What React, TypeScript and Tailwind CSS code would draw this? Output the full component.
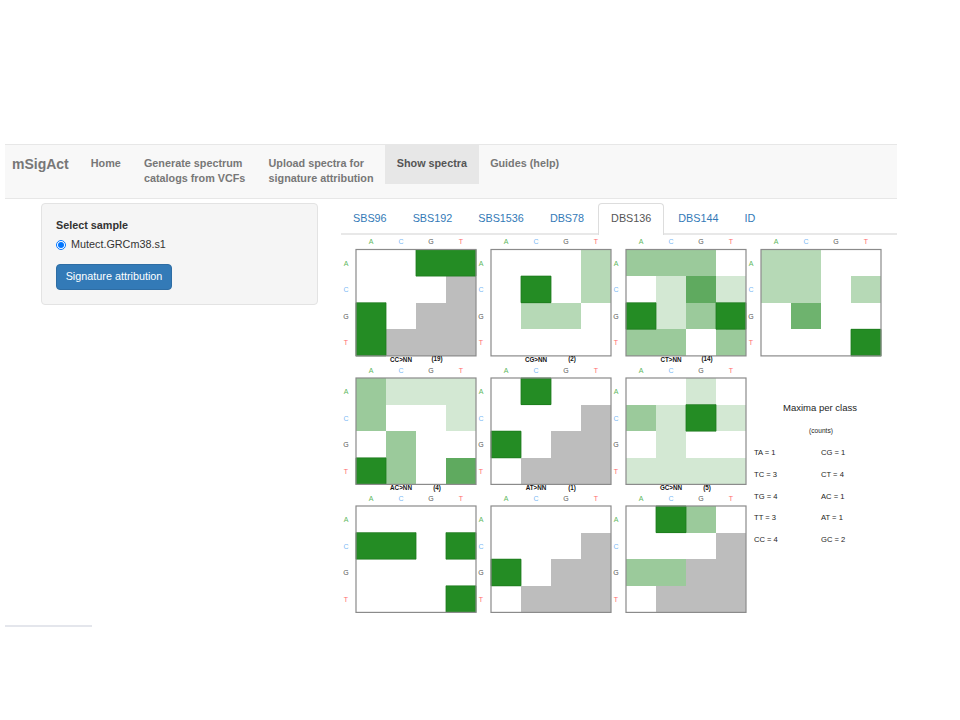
const NAV_ITEMS = [
  { label: ["Home"] },
  { label: ["Generate spectrum", "catalogs from VCFs"] },
  { label: ["Upload spectra for", "signature attribution"] },
  { label: ["Show spectra"], active: true },
  { label: ["Guides (help)"] },
];

const TABS = ["SBS96", "SBS192", "SBS1536", "DBS78", "DBS136", "DBS144", "ID"];

const BASES = ["A", "C", "G", "T"];
const BASE_COLORS = ["#5cb85c", "#7ab8f5", "#555555", "#ff6b6b"];

// cell values are green alpha, -1 is a grey "not possible" cell
const X = -1;
const PLOTS = [
  {
    col: 0,
    row: 0,
    title: "CC>NN",
    count: "(19)",
    cells: [
      [0, 0, 1, 1],
      [0, 0, 0, X],
      [1, 0, X, X],
      [1, X, X, X],
    ],
  },
  {
    col: 1,
    row: 0,
    title: "CG>NN",
    count: "(2)",
    cells: [
      [0, 0, 0, 0.33],
      [0, 1, 0, 0.33],
      [0, 0.33, 0.33, 0],
      [0, 0, 0, 0],
    ],
  },
  {
    col: 2,
    row: 0,
    title: "CT>NN",
    count: "(14)",
    cells: [
      [0.46, 0.46, 0.46, 0],
      [0, 0.2, 0.73, 0.2],
      [1, 0.2, 0.46, 1],
      [0.46, 0.46, 0, 0.46],
    ],
  },
  {
    col: 3,
    row: 0,
    cells: [
      [0.33, 0.33, 0, 0],
      [0.33, 0.33, 0, 0.33],
      [0, 0.66, 0, 0],
      [0, 0, 0, 1],
    ],
  },
  {
    col: 0,
    row: 1,
    title: "AC>NN",
    count: "(4)",
    cells: [
      [0.46, 0.2, 0.2, 0.2],
      [0.46, 0, 0, 0.2],
      [0, 0.46, 0, 0],
      [1, 0.46, 0, 0.73],
    ],
  },
  {
    col: 1,
    row: 1,
    title: "AT>NN",
    count: "(1)",
    cells: [
      [0, 1, 0, 0],
      [0, 0, 0, X],
      [1, 0, X, X],
      [0, X, X, X],
    ],
  },
  {
    col: 2,
    row: 1,
    title: "GC>NN",
    count: "(5)",
    cells: [
      [0, 0, 0.2, 0],
      [0.46, 0.2, 1, 0.2],
      [0, 0.2, 0, 0],
      [0.2, 0.2, 0.2, 0.2],
    ],
  },
  {
    col: 0,
    row: 2,
    cells: [
      [0, 0, 0, 0],
      [1, 1, 0, 1],
      [0, 0, 0, 0],
      [0, 0, 0, 1],
    ],
  },
  {
    col: 1,
    row: 2,
    cells: [
      [0, 0, 0, 0],
      [0, 0, 0, X],
      [1, 0, X, X],
      [0, X, X, X],
    ],
  },
  {
    col: 2,
    row: 2,
    cells: [
      [0, 1, 0.46, 0],
      [0, 0, 0, X],
      [0.46, 0.46, X, X],
      [0, X, X, X],
    ],
  },
];

const MAXIMA = [
  ["TA = 1", "CG = 1"],
  ["TC = 3", "CT = 4"],
  ["TG = 4", "AC = 1"],
  ["TT = 3", "AT = 1"],
  ["CC = 4", "GC = 2"],
];

const COL_X = [356, 491, 626, 761];
const ROW_Y = [249.5, 378, 506];
const CELL_W = 30;
const CELL_H = 26.6;

type PlotProps = {
  col: number;
  row: number;
  title?: string;
  count?: string;
  cells: number[][];
};

const Plot = ({ col, row, title, count, cells }: PlotProps) => {
  const x0 = COL_X[col];
  const y0 = ROW_Y[row];

  // dark outline goes only round a block of full-green cells, not between them
  const isFull = (r: number, c: number) => cells[r]?.[c] === 1;

  return (
    <g>
      {BASES.map((base, i) => (
        <text
          key={"top" + base}
          x={x0 + 15 + i * CELL_W}
          y={y0 - 5.5}
          fontSize="7"
          textAnchor="middle"
          fill={BASE_COLORS[i]}
        >
          {base}
        </text>
      ))}
      {BASES.map((base, i) => (
        <text
          key={"left" + base}
          x={x0 - 10}
          y={y0 + 16 + i * CELL_H}
          fontSize="7"
          textAnchor="middle"
          fill={BASE_COLORS[i]}
        >
          {base}
        </text>
      ))}
      {cells.map((cols, r) =>
        cols.map((v, c) =>
          v === 0 ? null : (
            <rect
              key={r + "-" + c}
              x={x0 + c * CELL_W}
              y={y0 + r * CELL_H}
              width={CELL_W}
              height={CELL_H}
              fill={v === X ? "#bdbdbd" : "#228b22"}
              fillOpacity={v === X ? 1 : v}
              shapeRendering="crispEdges"
            />
          ),
        ),
      )}
      {cells.map((cols, r) =>
        cols.map((v, c) => {
          if (v !== 1) return null;
          const x = x0 + c * CELL_W;
          const y = y0 + r * CELL_H;
          return (
            <g key={"edge" + r + "-" + c} stroke="#1c7a1c" strokeWidth="0.8">
              {!isFull(r - 1, c) && <line x1={x} y1={y} x2={x + CELL_W} y2={y} />}
              {!isFull(r + 1, c) && (
                <line x1={x} y1={y + CELL_H} x2={x + CELL_W} y2={y + CELL_H} />
              )}
              {!isFull(r, c - 1) && <line x1={x} y1={y} x2={x} y2={y + CELL_H} />}
              {!isFull(r, c + 1) && (
                <line x1={x + CELL_W} y1={y} x2={x + CELL_W} y2={y + CELL_H} />
              )}
            </g>
          );
        }),
      )}
      <rect
        x={x0}
        y={y0}
        width={CELL_W * 4}
        height={CELL_H * 4}
        fill="none"
        stroke="#8a8a8a"
        strokeWidth="1.2"
      />
      {title && (
        <>
          <text
            x={x0 + 45}
            y={y0 + 112}
            fontSize="6.3"
            fontWeight="bold"
            textAnchor="middle"
            fill="#111111"
          >
            {title}
          </text>
          <text
            x={x0 + 81}
            y={y0 + 111.7}
            fontSize="6.3"
            fontWeight="bold"
            textAnchor="middle"
            fill="#111111"
          >
            {count}
          </text>
        </>
      )}
    </g>
  );
};

const Chart = () => (
  <svg
    width="556"
    height="385"
    viewBox="341 235 556 385"
    className="block opacity-[0.99] font-['Liberation_Sans',Arial,sans-serif]"
  >
    {PLOTS.map((p, i) => (
      <Plot key={i} {...p} />
    ))}
    <text x="820" y="411" fontSize="9.5" textAnchor="middle" fill="#222222">
      Maxima per class
    </text>
    <text x="821" y="432.5" fontSize="6.6" textAnchor="middle" fill="#222222">
      (counts)
    </text>
    {MAXIMA.map((pair, i) => (
      <g key={i} fontSize="7.6" fill="#222222">
        <text x="754" y={455 + i * 21.8}>
          {pair[0]}
        </text>
        <text x="821" y={455 + i * 21.8}>
          {pair[1]}
        </text>
      </g>
    ))}
  </svg>
);

const App = () => {
  return (
    <div className="pt-[144px] pl-[5px] w-[897px] font-['Liberation_Sans',Arial,sans-serif] text-[10.8px] leading-[15.4px] text-[#333333]">
      <nav className="flex items-start h-[55px] bg-[#f8f8f8] border-y border-[#e7e7e7]">
        <div className="pl-[7px] pr-[10.4px] pt-[10px] text-[14px] leading-[18px] font-bold text-[#777777]">
          mSigAct
        </div>
        {NAV_ITEMS.map((item) => (
          <div
            key={item.label[0]}
            className={
              item.active
                ? "px-[11.6px] pt-[11px] h-[39px] font-bold bg-[#e7e7e7] text-[#555555]"
                : "px-[11.6px] pt-[11px] font-bold text-[#777777]"
            }
          >
            {item.label.map((line) => (
              <div key={line}>{line}</div>
            ))}
          </div>
        ))}
      </nav>

      <div className="flex">
        <div className="w-[336px] pl-9 pt-1">
          <div className="w-[277px] h-[102px] pt-[14px] px-[14px] bg-[#f5f5f5] border border-[#e3e3e3] rounded">
            <div className="font-bold">Select sample</div>
            <label className="flex items-center gap-[5px] mt-[4px]">
              <input
                type="radio"
                name="sample"
                defaultChecked
                className="w-[10px] h-[10px] m-0 accent-[#0075ff]"
              />
              <span>Mutect.GRCm38.s1</span>
            </label>
            <button className="block mt-[11px] w-[116px] h-[26px] bg-[#337ab7] border border-[#2e6da4] rounded text-white">
              Signature attribution
            </button>
          </div>
        </div>

        <div className="flex-1">
          <div className="flex h-[36px] pt-[4px] gap-[2px] border-b-2 border-[#e8e8e8]">
            {TABS.map((tab) =>
              tab === "DBS136" ? (
                <div
                  key={tab}
                  className="h-[32px] px-3 pt-[7px] bg-white text-[#555555] border border-b-0 border-[#dddddd] rounded-t"
                >
                  {tab}
                </div>
              ) : (
                <div key={tab} className="px-3 pt-[8px] text-[#337ab7]">
                  {tab}
                </div>
              ),
            )}
          </div>
          <Chart />
        </div>
      </div>

      <div className="w-[87px] h-[2px] mt-[5px] bg-[#e4e6ec]" />
    </div>
  );
};

export default App;
